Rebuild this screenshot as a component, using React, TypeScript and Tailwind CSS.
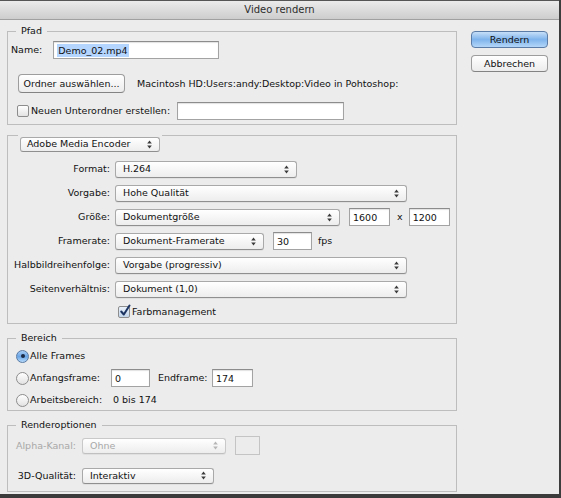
import React from 'react';

// Mac-style "Video rendern" dialog

const Arrows = ({ dim }: { dim?: boolean }) => (
  <svg width="5" height="9" viewBox="0 0 5 9" className="mr-[7px] shrink-0">
    <path d="M2.5 0.5 L4.8 3.5 L0.2 3.5 Z" fill={dim ? '#b5b5b5' : '#3a3a3a'} />
    <path d="M2.5 8.5 L4.8 5.5 L0.2 5.5 Z" fill={dim ? '#b5b5b5' : '#3a3a3a'} />
  </svg>
);

const Select = ({ value, className, disabled }: { value: string; className: string; disabled?: boolean }) => (
  <div
    className={`flex items-center shrink-0 rounded-[3px] border border-[#a9a9a9] border-b-[#8f8f8f] bg-gradient-to-b from-white to-[#ededed] shadow-[0_1px_0_rgba(0,0,0,0.05)] ${
      disabled ? 'text-[#a8a8a8] border-[#c9c9c9] border-b-[#c0c0c0]' : 'text-[#111]'
    } ${className}`}
  >
    <span className="flex-1 pl-[7px] truncate leading-none">{value}</span>
    <Arrows dim={disabled} />
  </div>
);

const Input = ({ value, className, selected }: { value?: string; className: string; selected?: boolean }) => (
  <div
    className={`flex items-center shrink-0 h-[18px] bg-white border border-[#a3a3a3] border-t-[#8c8c8c] shadow-[inset_0_1px_1px_rgba(0,0,0,0.12)] pl-[3px] ${className}`}
  >
    {value && (
      <span className={`leading-[13px] ${selected ? 'bg-[#b4d5fe] px-[1px]' : ''}`}>{value}</span>
    )}
  </div>
);

const Checkbox = ({ checked }: { checked?: boolean }) => (
  <div
    className={`relative shrink-0 w-[12px] h-[12px] rounded-[2px] border border-[#8d8d8d] bg-gradient-to-b ${
      checked ? 'from-[#e9f1fa] to-[#c3d5ea]' : 'from-white to-[#e3e3e3]'
    }`}
  >
    {checked && (
      <svg width="12" height="13" viewBox="0 0 12 13" className="absolute left-[0px] top-[-3px]">
        <path d="M2.2 7.5 L4.8 10.5 L10.5 1.5" stroke="#1c3462" strokeWidth="2" fill="none" strokeLinecap="round" strokeLinejoin="round" />
      </svg>
    )}
  </div>
);

const Radio = ({ checked }: { checked?: boolean }) =>
  checked ? (
    <div className="flex items-center justify-center shrink-0 w-[13px] h-[13px] rounded-full border border-[#5a7aa3] bg-gradient-to-b from-[#a7cdf4] via-[#6aa5e6] to-[#b6dafa]">
      <div className="w-[4px] h-[4px] rounded-full bg-[#1b2a44]" />
    </div>
  ) : (
    <div className="shrink-0 w-[13px] h-[13px] rounded-full border border-[#8d8d8d] bg-gradient-to-b from-white to-[#e2e2e2]" />
  );

const Row = ({ label, children }: { label: string; children: React.ReactNode }) => (
  <div className="flex items-center h-[24px]">
    <span className="w-[103px] text-right pr-[1px] shrink-0">{label}</span>
    <div className="flex items-center ml-[4px]">{children}</div>
  </div>
);

export default function App() {
  return (
    <div className="w-[561px] h-[498px] flex flex-col bg-[#ececec] border-r-[2px] border-[#3d3d3d] overflow-hidden text-[9.5px] leading-[12px] text-[#111] font-['DejaVu_Sans',sans-serif]">
      {/* title bar */}
      <div className="h-[20px] shrink-0 flex items-center justify-center border-t border-[#555] border-b border-b-[#a0a0a0] bg-gradient-to-b from-[#ebebeb] to-[#cdcdcd] text-[#2d2d2d] text-[10px]">
        Video rendern
      </div>

      <div className="flex flex-1">
        <div className="ml-[7px] w-[450px] flex flex-col">
          {/* Pfad */}
          <fieldset className="mt-[5px] border border-[#bdbdbd] pl-[3px] pb-[4px]">
            <legend className="ml-[5px] px-[5px]">Pfad</legend>
            <div className="flex items-center h-[18px] mt-[4px]">
              <span>Name:</span>
              <Input value="Demo_02.mp4" selected className="ml-[11px] w-[166px]" />
            </div>
            <div className="flex items-center h-[19px] mt-[15px] ml-[7px]">
              <div className="flex items-center justify-center w-[107px] h-[19px] rounded-[4px] border border-[#9d9d9d] border-b-[#838383] bg-gradient-to-b from-white to-[#ececec]">
                Ordner auswählen...
              </div>
              <span className="ml-[12px]">Macintosh HD:Users:andy:Desktop:Video in Pohtoshop:</span>
            </div>
            <div className="flex items-center h-[18px] mt-[9px] ml-[6px]">
              <Checkbox />
              <span className="ml-[2px] w-[146px]">Neuen Unterordner erstellen:</span>
              <Input className="w-[167px]" />
            </div>
          </fieldset>

          {/* Encoder */}
          <fieldset className="mt-[10px] border border-[#bdbdbd]">
            <legend className="ml-[10px] px-[2px] h-0">
              <div className="flex items-center w-[140px] h-[15px] mt-[1px] rounded-[3px] border border-[#a9a9a9] border-b-[#8f8f8f] bg-gradient-to-b from-white to-[#ededed]">
                <span className="flex-1 pl-[6px] leading-none">Adobe Media Encoder</span>
                <Arrows />
              </div>
            </legend>
            <div className="mt-[21px] flex flex-col">
              <Row label="Format:">
                <Select value="H.264" className="w-[182px] h-[17px]" />
              </Row>
              <Row label="Vorgabe:">
                <Select value="Hohe Qualität" className="w-[292px] h-[17px]" />
              </Row>
              <Row label="Größe:">
                <Select value="Dokumentgröße" className="w-[225px] h-[17px]" />
                <Input value="1600" className="ml-[9px] w-[41px]" />
                <span className="ml-[7px]">x</span>
                <Input value="1200" className="ml-[6px] w-[41px]" />
              </Row>
              <Row label="Framerate:">
                <Select value="Dokument-Framerate" className="w-[149px] h-[17px]" />
                <Input value="30" className="ml-[9px] w-[39px]" />
                <span className="ml-[6px]">fps</span>
              </Row>
              <Row label="Halbbildreihenfolge:">
                <Select value="Vorgabe (progressiv)" className="w-[292px] h-[17px]" />
              </Row>
              <Row label="Seitenverhältnis:">
                <Select value="Dokument (1,0)" className="w-[292px] h-[17px]" />
              </Row>
              <div className="flex items-center h-[22px] pl-[110px]">
                <Checkbox checked />
                <span className="ml-[2px]">Farbmanagement</span>
              </div>
            </div>
          </fieldset>

          {/* Bereich */}
          <fieldset className="mt-[8px] border border-[#bdbdbd] pl-[7px] pb-[3px]">
            <legend className="ml-[1px] px-[5px]">Bereich</legend>
            <div className="flex items-center h-[14px] mt-[5px] ml-[1px]">
              <Radio checked />
              <span className="ml-[1px]">Alle Frames</span>
            </div>
            <div className="flex items-center h-[18px] mt-[6px] ml-[1px]">
              <Radio />
              <span className="ml-[1px] w-[81px]">Anfangsframe:</span>
              <Input value="0" className="w-[39px]" />
              <span className="ml-[8px] w-[54px]">Endframe:</span>
              <Input value="174" className="w-[41px]" />
            </div>
            <div className="flex items-center h-[14px] mt-[6px] ml-[1px]">
              <Radio />
              <span className="ml-[1px] w-[83px]">Arbeitsbereich:</span>
              <span>0 bis 174</span>
            </div>
          </fieldset>

          {/* Renderoptionen */}
          <fieldset className="mt-[8px] border border-[#bdbdbd] pl-[7px] pb-[7px]">
            <legend className="ml-[1px] px-[5px]">Renderoptionen</legend>
            <div className="flex items-center h-[19px] mt-[5px]">
              <span className="w-[61px] text-right text-[#a8a8a8] shrink-0">Alpha-Kanal:</span>
              <Select value="Ohne" disabled className="ml-[6px] w-[144px] h-[16px]" />
              <div className="ml-[9px] w-[25px] h-[19px] border border-[#c4c4c4] bg-[#ececec]" />
            </div>
            <div className="flex items-center h-[17px] mt-[12px]">
              <span className="w-[61px] text-right shrink-0">3D-Qualität:</span>
              <Select value="Interaktiv" className="ml-[6px] w-[132px] h-[16px]" />
            </div>
          </fieldset>
        </div>

        {/* buttons */}
        <div className="ml-[14px] mt-[11px] flex flex-col gap-[7px] w-[77px]">
          <div className="flex items-center justify-center h-[17px] rounded-[4px] border border-[#5b7ca6] bg-gradient-to-b from-[#c6def7] via-[#7fb4ec] to-[#b3d6f8]">
            Rendern
          </div>
          <div className="flex items-center justify-center h-[17px] rounded-[4px] border border-[#9d9d9d] border-b-[#838383] bg-gradient-to-b from-white to-[#ececec]">
            Abbrechen
          </div>
        </div>
      </div>

      <div className="h-[4px] shrink-0 bg-[#3b3b3b]" />
    </div>
  );
}
